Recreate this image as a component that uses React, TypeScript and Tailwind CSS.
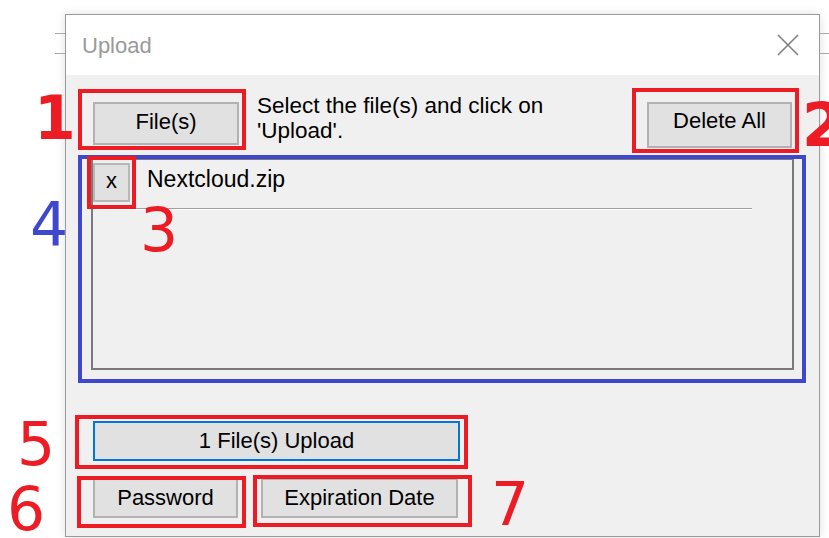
import React from 'react';

const ui = { fontFamily: '"Liberation Sans", Arial, sans-serif' };
const marks = { fontFamily: '"DejaVu Sans", sans-serif' };

const WinButton: React.FC<{ className?: string; children: React.ReactNode }> = ({ className = '', children }) => (
    <button
        type="button"
        className={`flex items-center justify-center bg-[#e1e1e1] text-black text-[22px] leading-none ${className}`}
    >
        {children}
    </button>
);

// red / blue callout frames drawn over the dialog
const Frame: React.FC<{ className: string }> = ({ className }) => (
    <div className={`absolute pointer-events-none border-4 ${className}`} />
);

const Mark: React.FC<{ className: string; children: React.ReactNode }> = ({ className, children }) => (
    <div className={`absolute pointer-events-none text-[60px] leading-[48px] ${className}`} style={marks}>
        {children}
    </div>
);

export default function App() {
    return (
        <div className="relative w-[829px] h-[538px] overflow-hidden bg-white pl-[65px] pt-[14px]" style={ui}>
            {/* edges of the window behind */}
            <div className="absolute left-[55px] top-[33px] w-[10px] h-[21px] border-y border-[#a8a8a8]" />
            <div className="absolute left-[819px] top-[33px] w-[10px] h-[21px] border-y border-[#a8a8a8]" />

            <div className="flex flex-col w-[755px] h-[523px] border border-[#9b9b9b] bg-white shadow-[0_0_9px_rgba(0,0,0,0.13)]">
                <div className="flex items-center h-[60px] pl-[16px] pr-[20px]">
                    <span className="text-[22px] text-[#9a9a9a]">Upload</span>
                    <svg className="ml-auto" width="22" height="22" viewBox="0 0 22 22">
                        <path d="M1 1 L21 21 M21 1 L1 21" stroke="#808080" strokeWidth="1.6" fill="none" />
                    </svg>
                </div>

                <div className="flex-1 flex flex-col bg-[#f0f0f0] px-[27px] pt-[18px]">
                    <div className="flex items-start">
                        <WinButton className="mt-[9px] w-[146px] h-[43px] pb-[4px] border-2 border-[#b2b2b2]">File(s)</WinButton>
                        <p className="ml-[18px] text-[22.5px] leading-[25px] text-black">
                            Select the file(s) and click on
                            <br />
                            'Upload'.
                        </p>
                        <WinButton className="ml-auto mt-[9px] w-[145px] h-[46px] pb-[8px] border-2 border-[#b2b2b2]">Delete All</WinButton>
                    </div>

                    <div className="mt-[10px] -ml-[2px] w-[703px] h-[212px] border-2 border-[#7a7a7a] flex flex-col">
                        <div className="flex items-start mt-[3px]">
                            <WinButton className="w-[37px] h-[39px] border-2 border-[#b8b8b8] pb-[3px]">x</WinButton>
                            <span className="ml-[17px] mt-[4px] text-[23px] leading-[25px] text-black">Nextcloud.zip</span>
                        </div>
                        <div className="mt-[6px] w-[659px]">
                            <div className="h-px bg-[#a0a0a0]" />
                            <div className="h-px bg-white" />
                        </div>
                    </div>

                    <WinButton className="mt-[51px] w-[367px] h-[40px] border-2 border-[#0078d7]">1 File(s) Upload</WinButton>

                    <div className="flex gap-[23px] mt-[17px]">
                        <WinButton className="w-[145px] h-[40px] border-2 border-[#b2b2b2]">Password</WinButton>
                        <WinButton className="w-[197px] h-[40px] border-2 border-[#b2b2b2]">Expiration Date</WinButton>
                    </div>
                </div>
            </div>

            <Frame className="left-[78px] top-[155px] w-[728px] h-[228px] border-[#3f48cc]" />
            <Frame className="left-[78px] top-[89px] w-[168px] h-[61px] border-[#ed1c24]" />
            <Frame className="left-[632px] top-[88px] w-[167px] h-[65px] border-[#ed1c24]" />
            <Frame className="left-[87px] top-[156px] w-[49px] h-[53px] border-[#ed1c24]" />
            <Frame className="left-[75px] top-[415px] w-[393px] h-[54px] border-[#ed1c24]" />
            <Frame className="left-[77px] top-[476px] w-[169px] h-[52px] border-[#ed1c24]" />
            <Frame className="left-[253px] top-[475px] w-[219px] h-[52px] border-[#ed1c24]" />

            <Mark className="left-[34px] top-[94px] font-bold text-[#ed1c24]">1</Mark>
            <Mark className="left-[802px] top-[101px] font-bold text-[#ed1c24]">2</Mark>
            <Mark className="left-[140px] top-[206px] text-[#ed1c24]">3</Mark>
            <Mark className="left-[30px] top-[200px] text-[#3f48cc]">4</Mark>
            <Mark className="left-[17px] top-[420px] text-[#ed1c24]">5</Mark>
            <Mark className="left-[7px] top-[485px] text-[#ed1c24]">6</Mark>
            <Mark className="left-[491px] top-[480px] text-[#ed1c24]">7</Mark>
        </div>
    );
}
